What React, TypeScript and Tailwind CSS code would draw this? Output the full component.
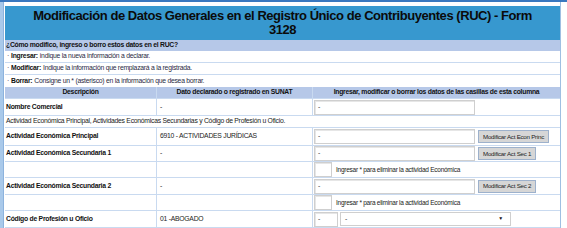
import type { ReactNode } from 'react'

const font = "font-['Liberation_Sans',Arial,sans-serif]"

function Cell({ w, children, className = '' }: { w: string; children?: ReactNode; className?: string }) {
  return <div className={`${w} shrink-0 h-full flex items-center border-r border-[#c9daf0] ${className}`}>{children}</div>
}

function TextBox({ w, value }: { w: string; value?: string }) {
  return (
    <div className={`${w} h-[15px] bg-white border border-[#cfcfcf] shadow-[inset_1px_1px_0_#e6e6e6] flex items-center pl-[3px] text-[6.8px] text-[#333]`}>
      {value}
    </div>
  )
}

function Btn({ children }: { children: ReactNode }) {
  return (
    <div className="ml-[3px] h-[13px] px-[4px] bg-[#d6d6d6] border border-[#9db1cc] flex items-center text-[6.2px] text-[#222] whitespace-nowrap">
      {children}
    </div>
  )
}

function Row({ h, label, dato, children }: { h: string; label?: string; dato?: string; children?: ReactNode }) {
  return (
    <div className={`${h} flex border-b border-[#c9daf0]`}>
      <Cell w="w-[152px]" className="pl-[1px] font-bold text-[6.8px] text-[#111]">{label}</Cell>
      <Cell w="w-[156px]" className="pl-[3px] text-[6.8px] text-[#222]">{dato}</Cell>
      <div className="flex-1 flex items-center pl-[1px]">{children}</div>
    </div>
  )
}

export default function App() {
  return (
    <div className={`w-[567px] h-[228px] overflow-hidden bg-white flex flex-col ${font} tracking-[-0.25px]`}>
      <div className="h-[2px] bg-[#3a78bf] shrink-0" />
      <div className="flex flex-1 min-h-0">
        <div className="w-[3px] bg-[#a9c9ea] shrink-0" />
        <div className="w-px bg-[#8db3dd] shrink-0" />
        <div className="w-[555px] ml-px pt-[4px] shrink-0">
          <div className="h-[34px] bg-[#3798cf] flex items-center justify-center text-center text-[13px] leading-[14px] font-bold text-[#0b0b0b] tracking-[-0.45px]">
            Modificación de Datos Generales en el Registro Único de Contribuyentes (RUC) - Form
            <br />
            3128
          </div>
          <div className="h-[11px] bg-[#b6c8e8] flex items-center pl-[1px] font-bold text-[6.8px] text-[#111]">
            ¿Cómo modifico, ingreso o borro estos datos en el RUC?
          </div>
          <div className="h-[12px] flex items-center pl-[2px] border-b border-[#c9daf0] text-[6.8px] text-[#2a2a44]">
            · <b className="ml-[2px] mr-[2px] text-[#111]">Ingresar:</b> indique la nueva información a declarar.
          </div>
          <div className="h-[12px] flex items-center pl-[2px] border-b border-[#c9daf0] text-[6.8px] text-[#2a2a44]">
            · <b className="ml-[2px] mr-[2px] text-[#111]">Modificar:</b> Indique la información que remplazará a la registrada.
          </div>
          <div className="h-[12px] flex items-center pl-[2px] text-[6.8px] text-[#2a2a44]">
            · <b className="ml-[2px] mr-[2px] text-[#111]">Borrar:</b> Consigne un * (asterisco) en la información que desea borrar.
          </div>
          <div className="h-[12px] flex bg-[#b6c8e8] font-bold text-[6.8px] text-[#111] border-b border-[#c9daf0]">
            <div className="w-[152px] flex items-center justify-center border-r border-[#c9daf0]">Descripción</div>
            <div className="w-[156px] flex items-center justify-center border-r border-[#c9daf0]">Dato declarado o registrado en SUNAT</div>
            <div className="flex-1 flex items-center justify-center">Ingresar, modificar o borrar los datos de las casillas de esta columna</div>
          </div>
          <Row h="h-[17px]" label="Nombre Comercial" dato="-">
            <TextBox w="w-[161px]" value="-" />
          </Row>
          <div className="h-[12px] flex items-center pl-[1px] border-b border-[#c9daf0] text-[6.8px] text-[#222]">
            Actividad Económica Principal, Actividades Económicas Secundarias y Código de Profesión u Oficio.
          </div>
          <Row h="h-[18px]" label="Actividad Económica Principal" dato="6910 - ACTIVIDADES JURÍDICAS">
            <TextBox w="w-[161px]" value="-" />
            <Btn>Modificar Act Econ Princ</Btn>
          </Row>
          <Row h="h-[16px]" label="Actividad Económica Secundaria 1" dato="-">
            <TextBox w="w-[161px]" value="-" />
            <Btn>Modificar Act Sec 1</Btn>
          </Row>
          <Row h="h-[16px]">
            <TextBox w="w-[18px]" />
            <span className="ml-[4px] text-[6.5px] text-[#222]">Ingresar * para eliminar la actividad Económica</span>
          </Row>
          <Row h="h-[17px]" label="Actividad Económica Secundaria 2" dato="-">
            <TextBox w="w-[161px]" value="-" />
            <Btn>Modificar Act Sec 2</Btn>
          </Row>
          <Row h="h-[16px]">
            <TextBox w="w-[18px]" />
            <span className="ml-[4px] text-[6.5px] text-[#222]">Ingresar * para eliminar la actividad Económica</span>
          </Row>
          <Row h="h-[17px]" label="Código de Profesión u Oficio" dato="01 -ABOGADO">
            <TextBox w="w-[24px]" value="-" />
            <div className="ml-[2px] w-[171px] h-[14px] bg-white border border-[#cfcfcf] flex items-center justify-between pl-[4px] pr-[7px] text-[6.8px] text-[#333]">
              <span>-</span>
              <span className="text-[5px] text-[#111]">▼</span>
            </div>
          </Row>
        </div>
        <div className="w-px bg-[#9fbfe2] shrink-0" />
      </div>
    </div>
  )
}
